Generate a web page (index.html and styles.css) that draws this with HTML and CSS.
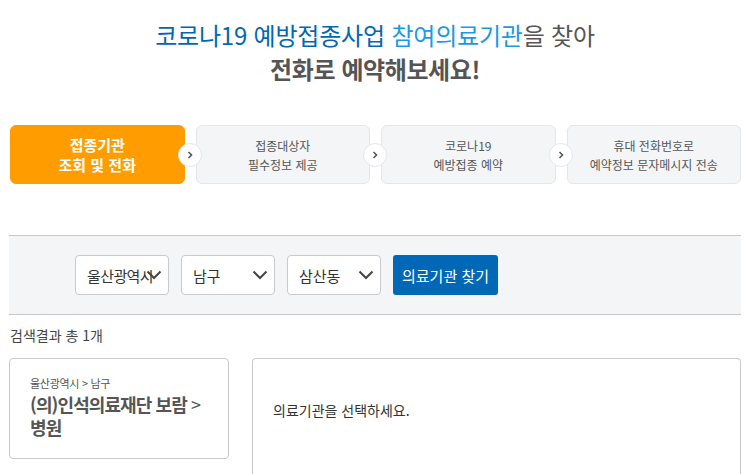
FILE: index.html
```html
<!DOCTYPE html>
<html lang="ko">
<head>
<meta charset="utf-8">
<link rel="stylesheet" href="styles.css">
</head>
<body>
<div class="page">
  <h1 class="title">
    <span class="t1"><span class="dark">코로나19 예방접종사업</span> <span class="light">참여의료기관</span>을 찾아</span>
    <span class="t2">전화로 예약해보세요!</span>
  </h1>
  <ol class="steps">
    <li class="step active">접종기관<br>조회 및 전화</li>
    <li class="step"><span class="arr"><svg viewBox="0 0 10 10" width="10" height="10"><path d="M3.5 2 L6.5 5 L3.5 8" fill="none" stroke="#555" stroke-width="1.6"/></svg></span>접종대상자<br>필수정보 제공</li>
    <li class="step"><span class="arr"><svg viewBox="0 0 10 10" width="10" height="10"><path d="M3.5 2 L6.5 5 L3.5 8" fill="none" stroke="#555" stroke-width="1.6"/></svg></span>코로나19<br>예방접종 예약</li>
    <li class="step"><span class="arr"><svg viewBox="0 0 10 10" width="10" height="10"><path d="M3.5 2 L6.5 5 L3.5 8" fill="none" stroke="#555" stroke-width="1.6"/></svg></span>휴대 전화번호로<br>예약정보 문자메시지 전송</li>
  </ol>
  <div class="filter">
    <div class="sel"><span class="sel-text">울산광역시</span><svg class="chev" viewBox="0 0 16 10" width="16" height="10"><path d="M1.5 1.5 L8 8 L14.5 1.5" fill="none" stroke="#444" stroke-width="2"/></svg></div>
    <div class="sel"><span class="sel-text">남구</span><svg class="chev" viewBox="0 0 16 10" width="16" height="10"><path d="M1.5 1.5 L8 8 L14.5 1.5" fill="none" stroke="#444" stroke-width="2"/></svg></div>
    <div class="sel"><span class="sel-text">삼산동</span><svg class="chev" viewBox="0 0 16 10" width="16" height="10"><path d="M1.5 1.5 L8 8 L14.5 1.5" fill="none" stroke="#444" stroke-width="2"/></svg></div>
    <button class="btn">의료기관 찾기</button>
  </div>
  <p class="count">검색결과 총 1개</p>
  <div class="results">
    <div class="card">
      <div class="loc">울산광역시 &gt; 남구</div>
      <div class="name">(의)인석의료재단 보람 <span class="gt">&gt;</span> 병원</div>
    </div>
    <div class="detail">의료기관을 선택하세요.</div>
  </div>
</div>
</body>
</html>
```
FILE: styles.css
```css
* { box-sizing: border-box; }
html, body { margin: 0; padding: 0; background: #fff; }
body {
  font-family: "Noto Sans CJK KR", "Noto Sans", sans-serif;
  color: #444;
  overflow: hidden;
  height: 474px;
}
.page { padding: 0 10px 0 9px; }
.title {
  margin: 0;
  padding-top: 18px;
  text-align: center;
  font-weight: normal;
  display: flex;
  flex-direction: column;
  align-items: center;
}
.t1 { font-size: 24px; line-height: 34px; color: #555; letter-spacing: -0.2px; }
.t2 { font-size: 24px; line-height: 34px; font-weight: bold; color: #555; letter-spacing: -0.4px; }
.dark { color: #0067b3; }
.light { color: #1b9ae4; }
.steps {
  list-style: none;
  margin: 39px 0 0 0;
  padding: 0 0 0 1px;
  display: grid;
  grid-template-columns: repeat(4, 1fr);
  gap: 11px;
}
.step {
  position: relative;
  height: 59px;
  border: 1px solid #e4e6eb;
  border-radius: 6px;
  background: #f4f5f7;
  color: #555;
  font-size: 12px;
  line-height: 19px;
  display: flex;
  align-items: center;
  justify-content: center;
  text-align: center;
}
.step.active {
  background: #ff9d00;
  border-color: #ff9d00;
  color: #fff;
  font-weight: bold;
  font-size: 15px;
  line-height: 20px;
}
.arr {
  position: absolute;
  left: -19px;
  top: 50%;
  margin-top: -12px;
  width: 24px;
  height: 24px;
  border-radius: 50%;
  background: #fff;
  border: 1px solid #e4e6eb;
  display: flex;
  align-items: center;
  justify-content: center;
  z-index: 1;
}
.filter {
  margin-top: 51px;
  height: 80px;
  border-top: 1px solid #c6c7cb;
  border-bottom: 1px solid #c6c7cb;
  background: #f4f5f7;
  display: flex;
  align-items: center;
  padding-left: 66px;
  gap: 12px;
}
.sel {
  width: 94px;
  height: 40px;
  border: 1px solid #c9cacd;
  border-radius: 4px;
  background: #fff;
  display: flex;
  align-items: center;
  padding-left: 11px;
  padding-right: 6px;
  font-size: 15px;
  color: #333;
  position: relative;
}
.sel-text { flex: 1; white-space: nowrap; min-width: 0; }
.chev { flex: none; margin-left: -8px; position: relative; }
.sel:nth-child(2) .chev, .sel:nth-child(3) .chev { margin-left: 0; }
.sel:first-child .sel-text { letter-spacing: -0.6px; }
.btn {
  width: 105px;
  height: 40px;
  border: none;
  border-radius: 3px;
  background: #0068b7;
  color: #fff;
  font-family: inherit;
  font-size: 15px;
  padding: 0;
}
.count {
  margin: 10px 0 0 1px;
  font-size: 14px;
  line-height: 20px;
  color: #444;
}
.results {
  margin-top: 13px;
  display: flex;
  gap: 23px;
  align-items: flex-start;
}
.card {
  width: 220px;
  height: 101px;
  border: 1px solid #c9cacd;
  border-radius: 4px;
  padding: 16px 10px 0 20px;
}
.loc { font-size: 11px; line-height: 16px; color: #555; letter-spacing: -0.3px; }
.name {
  font-size: 18px;
  line-height: 23px;
  font-weight: bold;
  color: #555;
  margin-top: 2px;
  letter-spacing: -0.9px;
}
.gt { font-weight: normal; }
.detail {
  flex: 1;
  height: 117px;
  border: 1px solid #c9cacd;
  border-bottom: none;
  border-radius: 4px 4px 0 0;
  padding: 41px 20px 0 20px;
  font-size: 14px;
  color: #333;
}
```
